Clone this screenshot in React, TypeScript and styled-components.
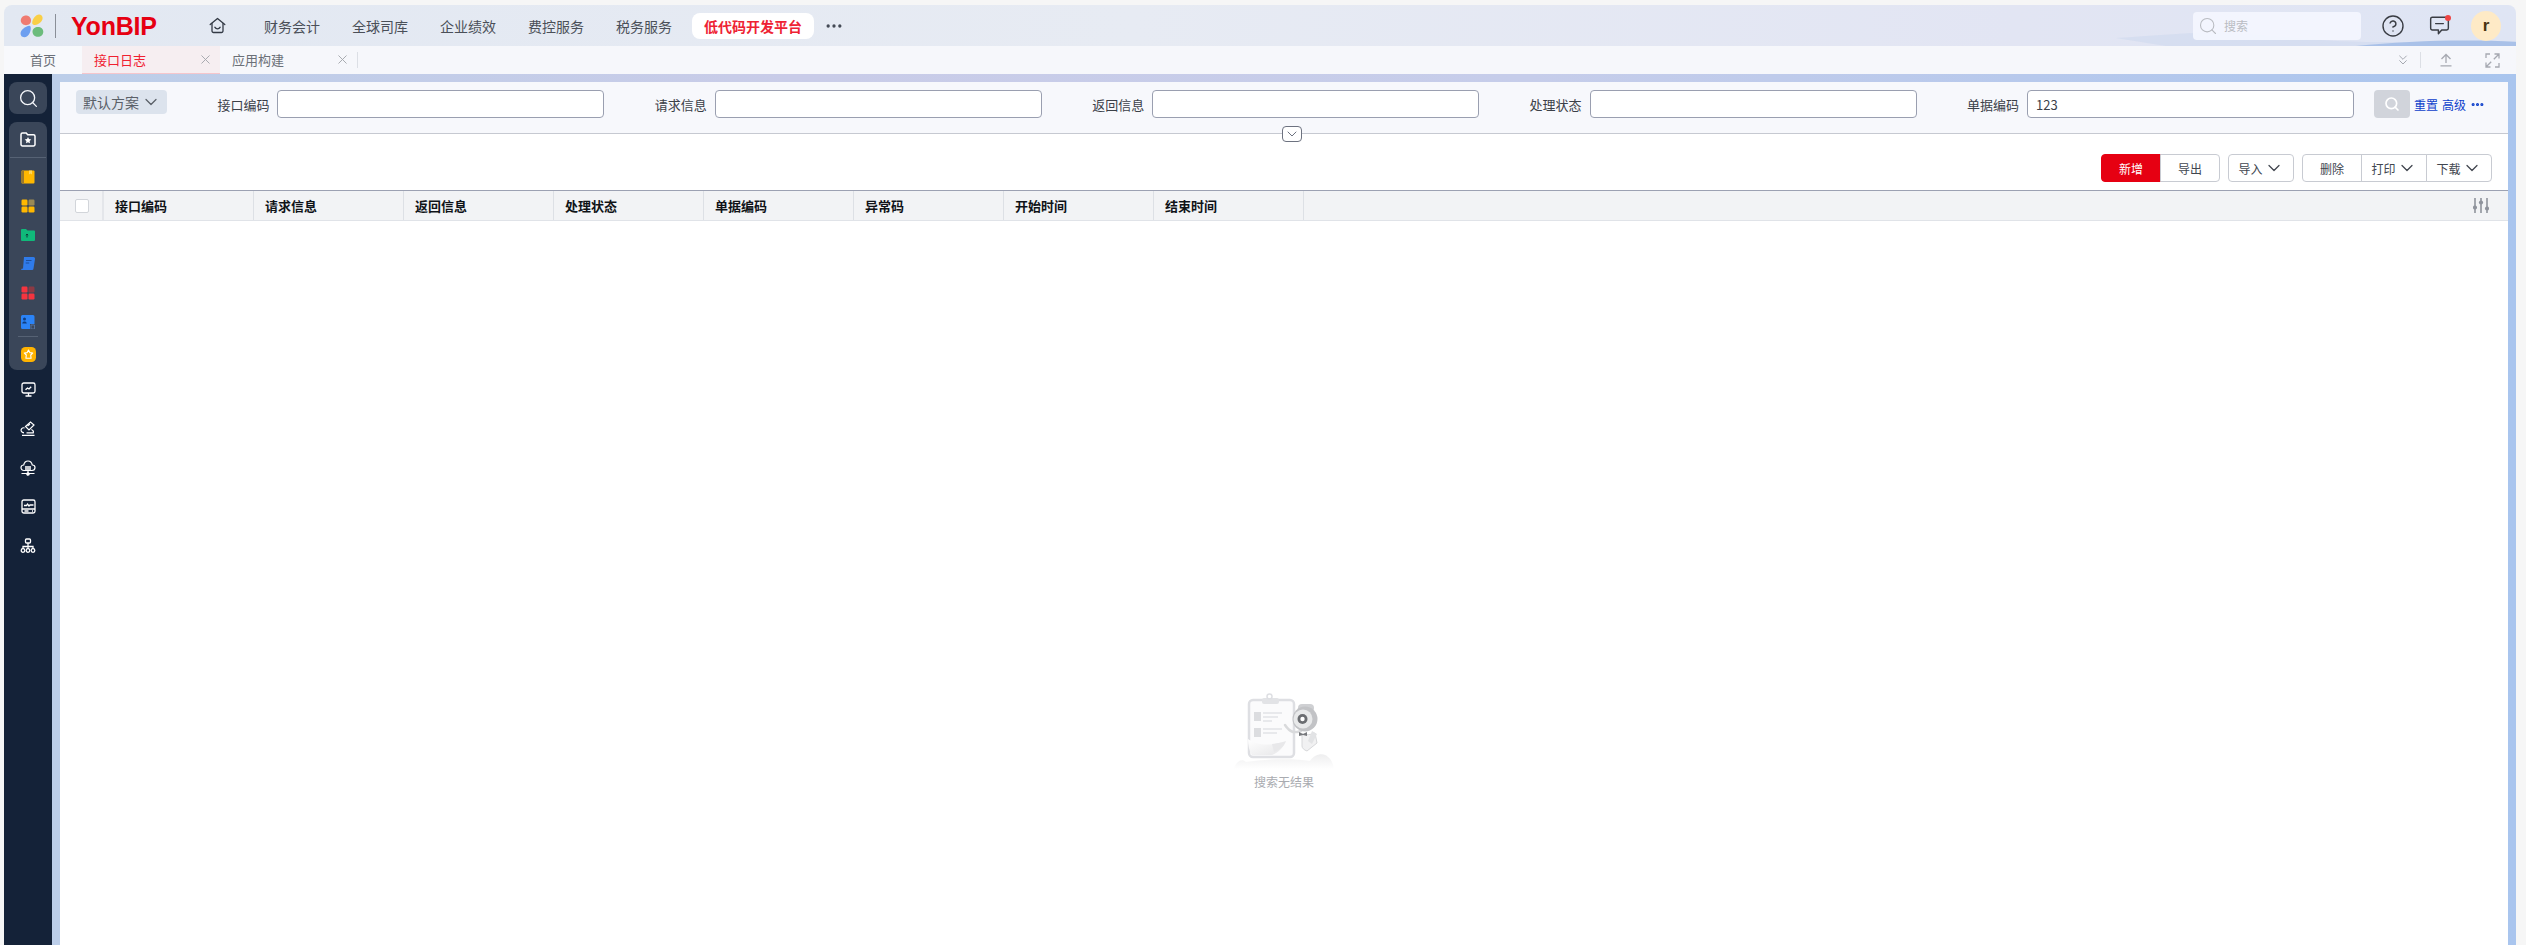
import React from 'react'
import styled, { createGlobalStyle } from 'styled-components'
import { ChevronDown, ChevronsDown, CircleHelp, Ellipsis, Search, X } from 'lucide-react'

const GlobalStyle = createGlobalStyle`
  html, body, #root {
    margin: 0;
    padding: 0;
    height: 100%;
  }
  body {
    background: #f6f6f6;
    font-family: "Noto Sans CJK SC", "Noto Sans", "Liberation Sans", sans-serif;
    overflow: hidden;
  }
  * {
    box-sizing: border-box;
  }
`

const Page = styled.div`
  height: 945px;
  padding: 5px 10px 0 4px;
`

const Frame = styled.div`
  height: 100%;
  display: flex;
  flex-direction: column;
  border-radius: 8px 8px 0 0;
  overflow: hidden;
`

const Header = styled.header`
  position: relative;
  height: 41px;
  flex-shrink: 0;
  display: flex;
  align-items: center;
  background: linear-gradient(90deg, #e2e8f2 0%, #e7ebf3 45%, #e2e5f3 80%, #dfe5f4 100%);
`

const Logo = styled.div`
  width: 51px;
  padding-left: 16px;
  flex-shrink: 0;
  display: flex;
`

const LogoRule = styled.div`
  width: 1px;
  height: 24px;
  background: #8a8f98;
  flex-shrink: 0;
`

const Brand = styled.div`
  width: 147px;
  padding-left: 15px;
  flex-shrink: 0;
  font-family: "Liberation Sans", sans-serif;
  font-size: 25px;
  line-height: 28px;
  font-weight: 700;
  letter-spacing: -0.2px;
  color: #e60012;
`

const Nav = styled.nav`
  display: flex;
  align-items: center;
`

const HomeLink = styled.div`
  width: 61px;
  display: flex;
  color: #333a45;
  padding-left: 6px;
`

const NavItem = styled.div`
  width: 88px;
  height: 26px;
  color: #4a4f58;
  font-size: 14px;
  line-height: 26px;
`

const ActiveNavItem = styled(NavItem)`
  width: 122px;
  margin: 0 10px 0 -12px;
  text-align: center;
  border-radius: 8px;
  background: #ffffff;
  color: #ee2233;
  font-weight: 700;
`

const MoreDots = styled.div`
  display: flex;
  color: #444a55;
`

const HeaderRight = styled.div`
  position: relative;
  margin-left: auto;
  display: flex;
  align-items: center;
  padding-right: 15px;
`

const HeaderSearch = styled.div`
  width: 168px;
  height: 28px;
  margin-right: 16px;
  padding-left: 5px;
  display: flex;
  align-items: center;
  gap: 6px;
  border-radius: 4px;
  background: rgba(243, 245, 254, 0.95);
  color: #b9bcc2;
  font-size: 12px;
`

const IconSlot = styled.div<{ $width: number }>`
  position: relative;
  width: ${(p) => p.$width}px;
  display: flex;
  justify-content: center;
  color: #3a3d44;
`

const Dot = styled.span`
  position: absolute;
  top: 0;
  right: 20px;
  width: 6px;
  height: 6px;
  border-radius: 50%;
  background: #ef4444;
`

const Avatar = styled.div`
  width: 30px;
  height: 30px;
  border-radius: 50%;
  background: #feeac6;
  color: #4a3410;
  font-family: "Liberation Sans", sans-serif;
  font-size: 17px;
  font-weight: 700;
  line-height: 29px;
  text-align: center;
`

const HeaderWave = styled.svg`
  position: absolute;
  right: 0;
  bottom: 0;
  width: 400px;
  height: 14px;
  pointer-events: none;
`

const TabBar = styled.div`
  height: 28px;
  flex-shrink: 0;
  display: flex;
  align-items: stretch;
  background: #f6f7fb;
`

const Tab = styled.div<{ $active?: boolean; $width: number }>`
  width: ${(p) => p.$width}px;
  display: flex;
  align-items: center;
  padding: 0 7px 0 12px;
  font-size: 13px;
  color: ${(p) => (p.$active ? '#f02030' : '#6b7078')};
  background: ${(p) => (p.$active ? '#f6eef1' : 'transparent')};
  border-bottom: 1px solid ${(p) => (p.$active ? '#f5c6cc' : 'transparent')};
  span {
    flex: 1;
  }
  svg {
    color: #a3a6ac;
  }
`

const HomeTab = styled(Tab)`
  justify-content: center;
  padding: 0;
  background: #f8f9fc;
  span {
    flex: none;
  }
`

const TabRule = styled.div`
  width: 1px;
  height: 16px;
  background: #dcdfe5;
  align-self: center;
`

const TabTools = styled.div`
  margin-left: auto;
  display: flex;
  align-items: center;
  color: #a6a9b1;
  padding-right: 16px;
`

const TabToolRule = styled(TabRule)`
  margin: 0 18px 0 9px;
`

const TabToolIcon = styled.div`
  display: flex;
  width: 46px;
`

const Body = styled.div`
  flex: 1;
  min-height: 0;
  display: flex;
`

const Sidebar = styled.aside`
  width: 48px;
  flex-shrink: 0;
  padding: 8px 5px 0;
  background: #142238;
  display: flex;
  flex-direction: column;
  align-items: center;
`

const SideSearch = styled.div`
  width: 38px;
  height: 32px;
  flex-shrink: 0;
  border-radius: 8px;
  background: #3a4659;
  color: #f4f6fa;
  display: flex;
  align-items: center;
  justify-content: center;
`

const SideGroup = styled.div`
  width: 38px;
  height: 248px;
  margin-top: 8px;
  padding-top: 6px;
  flex-shrink: 0;
  border-radius: 8px;
  background: #3a4659;
  display: flex;
  flex-direction: column;
  align-items: center;
`

const SideIcon = styled.div<{ $height?: number }>`
  height: ${(p) => p.$height ?? 29}px;
  flex-shrink: 0;
  display: flex;
  align-items: center;
  justify-content: center;
`

const SideRule = styled.div<{ $width: number; $before: number; $after: number }>`
  width: ${(p) => p.$width}px;
  height: 1px;
  margin: ${(p) => p.$before}px 0 ${(p) => p.$after}px;
  flex-shrink: 0;
  background: #566274;
`

const SideLinks = styled.div`
  display: flex;
  flex-direction: column;
  align-items: center;
`

const Stage = styled.div`
  flex: 1;
  min-width: 0;
  padding: 8px 8px 0;
  background: linear-gradient(90deg, #bccee9 0%, #c9cce8 30%, #c6cdea 60%, #a9c5ee 100%);
  display: flex;
`

const Panel = styled.main`
  flex: 1;
  min-width: 0;
  background: #ffffff;
  display: flex;
  flex-direction: column;
`

const FilterBar = styled.div`
  position: relative;
  height: 52px;
  flex-shrink: 0;
  padding: 8px 0 0 16px;
  display: flex;
  align-items: flex-start;
  background: #f7f8fc;
  border-bottom: 1px solid #c6c9d1;
`

const Scheme = styled.div`
  width: 91px;
  height: 24px;
  flex-shrink: 0;
  padding-left: 7px;
  display: flex;
  align-items: center;
  gap: 2px;
  border-radius: 4px;
  background: #dce3ed;
  color: #5a6068;
  font-size: 14px;
  white-space: nowrap;
`

const FieldGrid = styled.div`
  width: 2187px;
  flex-shrink: 0;
  display: grid;
  grid-template-columns: repeat(5, 1fr);
`

const Field = styled.label`
  display: flex;
  justify-content: flex-end;
  align-items: center;
  gap: 8px;
  font-size: 13px;
  color: #3b4048;
`

const FieldInput = styled.input`
  width: 327px;
  height: 28px;
  padding: 0 8px;
  border: 1px solid #9a9fb0;
  border-radius: 4px;
  background: #ffffff;
  outline: none;
  font-family: inherit;
  font-size: 13px;
  color: #3b4048;
`

const SearchButton = styled.button`
  width: 36px;
  height: 28px;
  margin-left: 20px;
  padding: 0;
  flex-shrink: 0;
  border: none;
  border-radius: 4px;
  background: #d1d4db;
  color: #ffffff;
  display: flex;
  align-items: center;
  justify-content: center;
`

const FilterLinks = styled.div`
  height: 28px;
  margin-left: 4px;
  display: flex;
  align-items: center;
  gap: 4px;
  color: #0d3fcb;
  font-size: 12px;
  white-space: nowrap;
`

const CollapseHandle = styled.div`
  position: absolute;
  left: 1222px;
  top: 44px;
  width: 20px;
  height: 16px;
  border: 1px solid #6d7280;
  border-radius: 4px;
  background: #ffffff;
  color: #6d7280;
  display: flex;
  align-items: center;
  justify-content: center;
`

const Toolbar = styled.div`
  height: 56px;
  flex-shrink: 0;
  padding: 20px 16px 0 0;
  display: flex;
  justify-content: flex-end;
  gap: 8px;
`

const ButtonGroup = styled.div`
  display: flex;
`

const ToolButton = styled.button<{ $primary?: boolean; $width: number }>`
  width: ${(p) => p.$width}px;
  height: 28px;
  padding: 0;
  margin-left: -1px;
  display: flex;
  align-items: center;
  justify-content: center;
  gap: 1px;
  border: 1px solid ${(p) => (p.$primary ? '#e60012' : '#c8cbd2')};
  background: ${(p) => (p.$primary ? '#e60012' : '#ffffff')};
  color: ${(p) => (p.$primary ? '#ffffff' : '#41464f')};
  font-family: inherit;
  font-size: 12px;
  &:first-child {
    margin-left: 0;
    border-radius: 4px 0 0 4px;
  }
  &:last-child {
    border-radius: 0 4px 4px 0;
  }
  &:only-child {
    border-radius: 4px;
  }
`

const TableHead = styled.div`
  height: 31px;
  flex-shrink: 0;
  display: flex;
  align-items: stretch;
  background: #f2f3f5;
  border-top: 1px solid #9ca1b2;
  border-bottom: 1px solid #e0e3e8;
`

const CheckCell = styled.div`
  width: 44px;
  flex-shrink: 0;
  padding-left: 15px;
  display: flex;
  align-items: center;
  border-right: 2px solid #e4e6ea;
`

const CheckBox = styled.div`
  width: 14px;
  height: 14px;
  border: 1px solid #d2d5da;
  border-radius: 2px;
  background: #ffffff;
`

const HeadCell = styled.div`
  width: 150px;
  flex-shrink: 0;
  padding-left: 11px;
  border-right: 1px solid #dde0e5;
  color: #101318;
  font-size: 13px;
  font-weight: 700;
  line-height: 29px;
`

const HeadTools = styled.div`
  margin-left: auto;
  padding-right: 19px;
  display: flex;
  align-items: center;
  color: #8f939c;
`

const EmptyState = styled.div`
  flex: 1;
  padding-top: 470px;
  display: flex;
  flex-direction: column;
  align-items: center;
`

const EmptyText = styled.div`
  margin-top: 1px;
  color: #a9abb0;
  font-size: 12px;
  line-height: 16px;
`

const columns = ['接口编码', '请求信息', '返回信息', '处理状态', '单据编码', '异常码', '开始时间', '结束时间']
const navItems = ['财务会计', '全球司库', '企业绩效', '费控服务', '税务服务']
const filters = [
  { label: '接口编码', value: '' },
  { label: '请求信息', value: '' },
  { label: '返回信息', value: '' },
  { label: '处理状态', value: '' },
  { label: '单据编码', value: '123' },
]

function LogoMark() {
  return (
    <svg width="24" height="24" viewBox="0 0 24 24">
      <path d="M6 1.500c3 0 5 2.200 5 5 0 2.800-2.200 4.700-5 4.700S.8 9.200.8 6.500 3 1.500 6 1.500z" fill="#ef7b71" />
      <path d="M19.500.5c2.300.3 3.500 2.500 3 4.500-.6 2.800-3.500 5.500-7.500 6-1.800.2-3-.8-2.800-2.500.3-3.500 3.700-8.500 7.300-8z" fill="#f9cf47" />
      <path d="M10.500 12.500c.8 2.500-.2 7-3 9.500-2 1.700-5 1.700-6.300-.2-1.400-2.200-.4-5 2-7 2.400-2 6.700-4 7.300-2.300z" fill="#6d9ff0" />
      <path d="M18 13c3 0 5.300 2 5.300 4.800 0 3-2.400 5-5.300 5s-5.500-2-5.500-5c0-2.800 2.500-4.800 5.500-4.800z" fill="#6cbc7c" />
    </svg>
  )
}

function HomeIcon() {
  return (
    <svg width="17" height="17" viewBox="0 0 17 17" fill="none" stroke="currentColor" strokeWidth="1.300" strokeLinejoin="round" strokeLinecap="round">
      <path d="M1.200 7.600 8.500 1.500l7.300 6.100" />
      <path d="M3 6.400V14a1.500 1.500 0 0 0 1.500 1.500h8A1.500 1.500 0 0 0 14 14V6.400" />
      <path d="M5.800 10.200c.7 1.200 1.600 1.700 2.700 1.700s2-.5 2.700-1.700" />
    </svg>
  )
}

function MessageIcon() {
  return (
    <svg width="21" height="21" viewBox="0 0 19 19" fill="none" stroke="currentColor" strokeWidth="1.300" strokeLinejoin="round">
      <path d="M3 2h13a1.500 1.500 0 0 1 1.500 1.500V12a1.500 1.500 0 0 1-1.500 1.500h-4.500L8.500 17v-3.500H3A1.500 1.500 0 0 1 1.500 12V3.500A1.500 1.500 0 0 1 3 2z" />
      <path d="M6 7.800h7" strokeLinecap="round" />
    </svg>
  )
}

function UploadIcon() {
  return (
    <svg width="14" height="14" viewBox="0 0 14 14" fill="none" stroke="currentColor" strokeWidth="1.300">
      <path d="M7 10V1.500M2.500 6 7 1.500 11.500 6M1.500 12.800h11" />
    </svg>
  )
}

function ExpandIcon() {
  return (
    <svg width="15" height="15" viewBox="0 0 15 15" fill="none" stroke="currentColor" strokeWidth="1.300">
      <path d="M9.500 1h4.500v4.500M14 1 8.800 6.200M5.500 14H1V9.500M1 14l5.200-5.200M1 5V1h4M14 10v4h-4" />
    </svg>
  )
}

function SlidersIcon() {
  return (
    <svg width="16" height="15" viewBox="0 0 16 15" fill="none" stroke="currentColor" strokeWidth="1.600">
      <path d="M2 0v15M8 0v15M14 0v15" />
      <circle cx="2" cy="9.500" r="2.100" fill="currentColor" stroke="none" />
      <circle cx="8" cy="4.500" r="2.100" fill="currentColor" stroke="none" />
      <circle cx="14" cy="10.500" r="2.100" fill="currentColor" stroke="none" />
    </svg>
  )
}

function StarFolderIcon() {
  return (
    <svg width="16" height="15" viewBox="0 0 16 15">
      <path d="M1 2.500A1.500 1.500 0 0 1 2.500 1h3.700l1.500 1.800h5.800A1.500 1.500 0 0 1 15 4.300v8.200a1.500 1.500 0 0 1-1.500 1.500h-11A1.500 1.500 0 0 1 1 12.500z" fill="none" stroke="#fff" strokeWidth="1.500" />
      <path d="m8 5 1 2.100 2.300.3-1.700 1.600.4 2.300L8 10.200 6 11.300l.4-2.300-1.700-1.600L7 7.100z" fill="#fff" />
    </svg>
  )
}

function BookIcon() {
  return (
    <svg width="14" height="14" viewBox="0 0 14 14">
      <rect x="0.500" y="0.500" width="13" height="13" rx="1" fill="#ffb800" />
      <path d="M0.500 1.500a1 1 0 0 1 1-1H3v13H1.500a1 1 0 0 1-1-1z" fill="#9b7a2d" />
      <path d="M8 0.500h3v4L9.500 3.400 8 4.500z" fill="#ffd75e" />
    </svg>
  )
}

function TilesIcon({ color, dim }: { color: string; dim: string }) {
  return (
    <svg width="14" height="14" viewBox="0 0 14 14">
      <rect x="0.500" y="0.500" width="6" height="6" rx="1.200" fill={color} />
      <rect x="7.500" y="0.500" width="6" height="6" rx="1.200" fill={dim} />
      <rect x="0.500" y="7.500" width="6" height="6" rx="1.200" fill={color} />
      <rect x="7.500" y="7.500" width="6" height="6" rx="1.200" fill={color} />
    </svg>
  )
}

function GreenFolderIcon() {
  return (
    <svg width="14" height="13" viewBox="0 0 14 13">
      <path d="M1 1h4l1.500 1.500H13a1 1 0 0 1 1 1V12a1 1 0 0 1-1 1H1a1 1 0 0 1-1-1V2a1 1 0 0 1 1-1z" fill="#10b97a" />
      <path d="M6 9.500V6.200M4.800 7.200 6 6l1.200 1.200" stroke="#0b3d3a" strokeWidth="1" fill="none" />
    </svg>
  )
}

function ScrollIcon() {
  return (
    <svg width="14" height="13" viewBox="0 0 14 13">
      <path d="M3 0h9.500a1.500 1.500 0 0 1 1.500 1.500V2l-1.500 9.500a1.500 1.500 0 0 1-1.500 1.500H1a1 1 0 0 1-1-1l2-.5z" fill="#2f7bea" />
      <path d="M5 3.500h5.500M4.700 6h3.500" stroke="#1d4f9c" strokeWidth="1.100" />
    </svg>
  )
}

function ContactIcon() {
  return (
    <svg width="14" height="14" viewBox="0 0 14 14">
      <path d="M1.500 0H12a1.500 1.500 0 0 1 1.500 1.500V9H9v5H1.500A1.500 1.500 0 0 1 0 12.500v-11A1.500 1.500 0 0 1 1.500 0z" fill="#2b83f6" />
      <circle cx="3.500" cy="4" r="1.500" fill="#0f3d80" />
      <path d="M1.200 8.500c.3-1.500 1.200-2 2.300-2s2 .5 2.300 2z" fill="#0f3d80" />
      <path d="M10 10h3.500v4H10z" fill="none" stroke="#5a7aa8" strokeWidth="0.800" />
    </svg>
  )
}

function FavBadgeIcon() {
  return (
    <svg width="15" height="15" viewBox="0 0 15 15">
      <rect width="15" height="15" rx="4.500" fill="#ffb300" />
      <path d="m7.500 3 1.300 2.600 2.900.4-2 2 .4 3.200h-5.200l.4-3.200-2-2 2.900-.4z" fill="none" stroke="#fff" strokeWidth="1.100" strokeLinejoin="round" />
    </svg>
  )
}

function MonitorIcon() {
  return (
    <svg width="15" height="15" viewBox="0 0 15 15" fill="none" stroke="#fff" strokeWidth="1.300">
      <rect x="1" y="1" width="13" height="10" rx="1.800" />
      <path d="M7.500 11v3M4.500 14h6" />
      <path d="m4.500 7.800 2-1.800 1.500 1 2.200-2.300" />
    </svg>
  )
}

function RobotArmIcon() {
  return (
    <svg width="16" height="15" viewBox="0 0 16 15" fill="none" stroke="#fff" strokeWidth="1.200">
      <path d="M2 14.300h12.500M4 11.800c-2.300-.2-3.300-1.600-2.800-3.300C1.700 7 3.200 6.400 4.600 7" />
      <path d="M5.500 5.500 10.500 1l3.500 3-5 5z" />
      <path d="m7.500 5 2.500-2" />
      <path d="M6.500 11.800h6.800c.5-1.200-.3-2.800-2-3.300" />
    </svg>
  )
}

function CloudNodeIcon() {
  return (
    <svg width="16" height="16" viewBox="0 0 16 16" fill="none" stroke="#fff" strokeWidth="1.200">
      <path d="M4 10.500C2 10.500 1 9 1 7.500 1 6 2.200 5 3.700 5 4.200 2.700 6 1 8 1s3.800 1.700 4.300 4c1.500 0 2.700 1 2.700 2.500 0 1.500-1 3-3 3z" />
      <path d="M5 7h6M5 9h6" strokeWidth="1.400" />
      <path d="M8 10.500v3M1.500 13.500h13" />
      <circle cx="8" cy="14" r="1.200" fill="#fff" />
    </svg>
  )
}

function PanelIcon() {
  return (
    <svg width="15" height="15" viewBox="0 0 15 15" fill="none" stroke="#fff" strokeWidth="1.300">
      <rect x="1" y="1" width="13" height="13" rx="1.800" />
      <path d="M1 10h13M3 6.500h2.500l1-1.500 1.500 2 1-1h3.500" />
      <path d="M3.500 12h4M11 12h1" />
    </svg>
  )
}

function OrgIcon() {
  return (
    <svg width="16" height="15" viewBox="0 0 16 15" fill="none" stroke="#fff" strokeWidth="1.300">
      <rect x="5.500" y="1" width="5" height="4" rx="1" />
      <path d="M8 5v3M3 11V8.500h10V11M8 8v3" />
      <circle cx="3" cy="12.500" r="1.800" />
      <circle cx="8" cy="12.500" r="1.800" />
      <circle cx="13" cy="12.500" r="1.800" />
    </svg>
  )
}

function EmptyArt() {
  return (
    <svg width="100" height="82" viewBox="0 0 100 82">
      <defs>
        <linearGradient id="ground" x1="0" y1="0" x2="0" y2="1">
          <stop offset="0" stopColor="#eeeeef" />
          <stop offset="1" stopColor="#ffffff" />
        </linearGradient>
        <linearGradient id="curl" x1="0" y1="0" x2="1" y2="1">
          <stop offset="0" stopColor="#ffffff" />
          <stop offset="1" stopColor="#e6e6e8" />
        </linearGradient>
      </defs>
      <path d="M0 78c2-8 8-11 12-7 18-3 48-4 64-1 4-7 14-9 18-4 3 2 5 6 6 12z" fill="url(#ground)" />
      <rect x="15" y="9" width="45" height="57" rx="4" fill="#fbfbfc" stroke="#dedfe3" strokeWidth="2.500" />
      <rect x="28" y="7" width="17" height="6" rx="2" fill="#e2e3e6" />
      <circle cx="35.500" cy="5.500" r="2.500" fill="none" stroke="#dedfe3" strokeWidth="1.500" />
      <rect x="20" y="21" width="7" height="9" fill="#dcdde0" />
      <path d="M29 22h19M29 26h15M29 30h9" stroke="#e2e3e6" strokeWidth="1.300" />
      <rect x="20" y="37" width="7" height="9" fill="#dcdde0" />
      <path d="M29 38h19M29 42h14" stroke="#e2e3e6" strokeWidth="1.300" />
      <path d="M14 48c8 6 22 8 38 2-2 6-8 12-14 14H18c-3-4-4-10-4-16z" fill="url(#curl)" />
      <path d="M38 53c6-1 12-2 14-3-2 5-6 9-12 11z" fill="#e8e8ea" />
      <path d="M51 34c2 3 5 6 8 7 3 .5 6-.5 8-1" stroke="#d9dadc" strokeWidth="2.500" fill="none" strokeLinecap="round" />
      <rect x="64" y="13" width="16" height="8" rx="4" fill="#cfd0d3" />
      <circle cx="71" cy="28" r="12.500" fill="#c2c3c6" />
      <circle cx="69" cy="28" r="9.500" fill="#e8e9ea" />
      <circle cx="68.500" cy="28" r="5" fill="#6b6d71" />
      <circle cx="68.500" cy="28" r="2.200" fill="#ffffff" />
      <path d="M68 43c4 1 9 1 13-1l2 10-10 8c-3-1-5-3-5-5z" fill="#f1f1f2" stroke="#d7d8da" strokeWidth="1" />
      <path d="M65 41l4 2 4-2v4l-4-1-4 1z" fill="#77797d" />
      <path d="M78 40l5 3-5 10-4-3z" fill="#e2e3e5" />
    </svg>
  )
}

export default function App() {
  return (
    <Page>
      <GlobalStyle />
      <Frame>
        <Header>
          <HeaderWave viewBox="0 0 400 14" preserveAspectRatio="none">
            <path d="M0 6C40 4 70 0 105 1c50 1 90 9 160 9 45 0 90 0 135-1v5H50z" fill="#ced8ef" opacity="0.6" />
            <path d="M240 14c50-5 110-7 160-4v4z" fill="#a9c1e8" />
          </HeaderWave>
          <Logo>
            <LogoMark />
          </Logo>
          <LogoRule />
          <Brand>YonBIP</Brand>
          <Nav>
            <HomeLink>
              <HomeIcon />
            </HomeLink>
            {navItems.map((item) => (
              <NavItem key={item}>{item}</NavItem>
            ))}
            <ActiveNavItem>低代码开发平台</ActiveNavItem>
            <MoreDots>
              <Ellipsis size={20} />
            </MoreDots>
          </Nav>
          <HeaderRight>
            <HeaderSearch>
              <Search size={20} strokeWidth={1.300} />
              搜索
            </HeaderSearch>
            <IconSlot $width={31}>
              <CircleHelp size={24} strokeWidth={1.400} />
            </IconSlot>
            <IconSlot $width={63}>
              <MessageIcon />
              <Dot />
            </IconSlot>
            <Avatar>r</Avatar>
          </HeaderRight>
        </Header>

        <TabBar>
          <HomeTab $width={78}>
            <span>首页</span>
          </HomeTab>
          <Tab $active $width={138}>
            <span>接口日志</span>
            <X size={15} strokeWidth={1.500} />
          </Tab>
          <Tab $width={137}>
            <span>应用构建</span>
            <X size={15} strokeWidth={1.500} />
          </Tab>
          <TabRule />
          <TabTools>
            <ChevronsDown size={16} strokeWidth={1.500} />
            <TabToolRule />
            <TabToolIcon>
              <UploadIcon />
            </TabToolIcon>
            <ExpandIcon />
          </TabTools>
        </TabBar>

        <Body>
          <Sidebar>
            <SideSearch>
              <Search size={21} strokeWidth={1.500} />
            </SideSearch>
            <SideGroup>
              <SideIcon $height={23}>
                <StarFolderIcon />
              </SideIcon>
              <SideRule $width={36} $before={6} $after={4} />
              <SideIcon>
                <BookIcon />
              </SideIcon>
              <SideIcon>
                <TilesIcon color="#ffb800" dim="#9b8a55" />
              </SideIcon>
              <SideIcon>
                <GreenFolderIcon />
              </SideIcon>
              <SideIcon>
                <ScrollIcon />
              </SideIcon>
              <SideIcon>
                <TilesIcon color="#f5343f" dim="#8c3a44" />
              </SideIcon>
              <SideIcon>
                <ContactIcon />
              </SideIcon>
              <SideRule $width={20} $before={0} $after={4} />
              <SideIcon $height={27}>
                <FavBadgeIcon />
              </SideIcon>
            </SideGroup>
            <SideLinks>
              <SideIcon $height={39}>
                <MonitorIcon />
              </SideIcon>
              <SideIcon $height={39}>
                <RobotArmIcon />
              </SideIcon>
              <SideIcon $height={39}>
                <CloudNodeIcon />
              </SideIcon>
              <SideIcon $height={39}>
                <PanelIcon />
              </SideIcon>
              <SideIcon $height={39}>
                <OrgIcon />
              </SideIcon>
            </SideLinks>
          </Sidebar>

          <Stage>
            <Panel>
              <FilterBar>
                <Scheme>
                  默认方案
                  <ChevronDown size={20} strokeWidth={1.500} />
                </Scheme>
                <FieldGrid>
                  {filters.map((f) => (
                    <Field key={f.label}>
                      {f.label}
                      <FieldInput defaultValue={f.value} />
                    </Field>
                  ))}
                </FieldGrid>
                <SearchButton>
                  <Search size={16} strokeWidth={2.500} />
                </SearchButton>
                <FilterLinks>
                  <span>重置</span>
                  <span>高级</span>
                  <Ellipsis size={15} strokeWidth={3} />
                </FilterLinks>
                <CollapseHandle>
                  <ChevronDown size={16} strokeWidth={1.500} />
                </CollapseHandle>
              </FilterBar>

              <Toolbar>
                <ButtonGroup>
                  <ToolButton $primary $width={60}>新增</ToolButton>
                  <ToolButton $width={60}>导出</ToolButton>
                </ButtonGroup>
                <ButtonGroup>
                  <ToolButton $width={66}>
                    导入 <ChevronDown size={20} strokeWidth={1.500} />
                  </ToolButton>
                </ButtonGroup>
                <ButtonGroup>
                  <ToolButton $width={60}>删除</ToolButton>
                  <ToolButton $width={66}>
                    打印 <ChevronDown size={20} strokeWidth={1.500} />
                  </ToolButton>
                  <ToolButton $width={66}>
                    下载 <ChevronDown size={20} strokeWidth={1.500} />
                  </ToolButton>
                </ButtonGroup>
              </Toolbar>

              <TableHead>
                <CheckCell>
                  <CheckBox />
                </CheckCell>
                {columns.map((c) => (
                  <HeadCell key={c}>{c}</HeadCell>
                ))}
                <HeadTools>
                  <SlidersIcon />
                </HeadTools>
              </TableHead>

              <EmptyState>
                <EmptyArt />
                <EmptyText>搜索无结果</EmptyText>
              </EmptyState>
            </Panel>
          </Stage>
        </Body>
      </Frame>
    </Page>
  )
}
